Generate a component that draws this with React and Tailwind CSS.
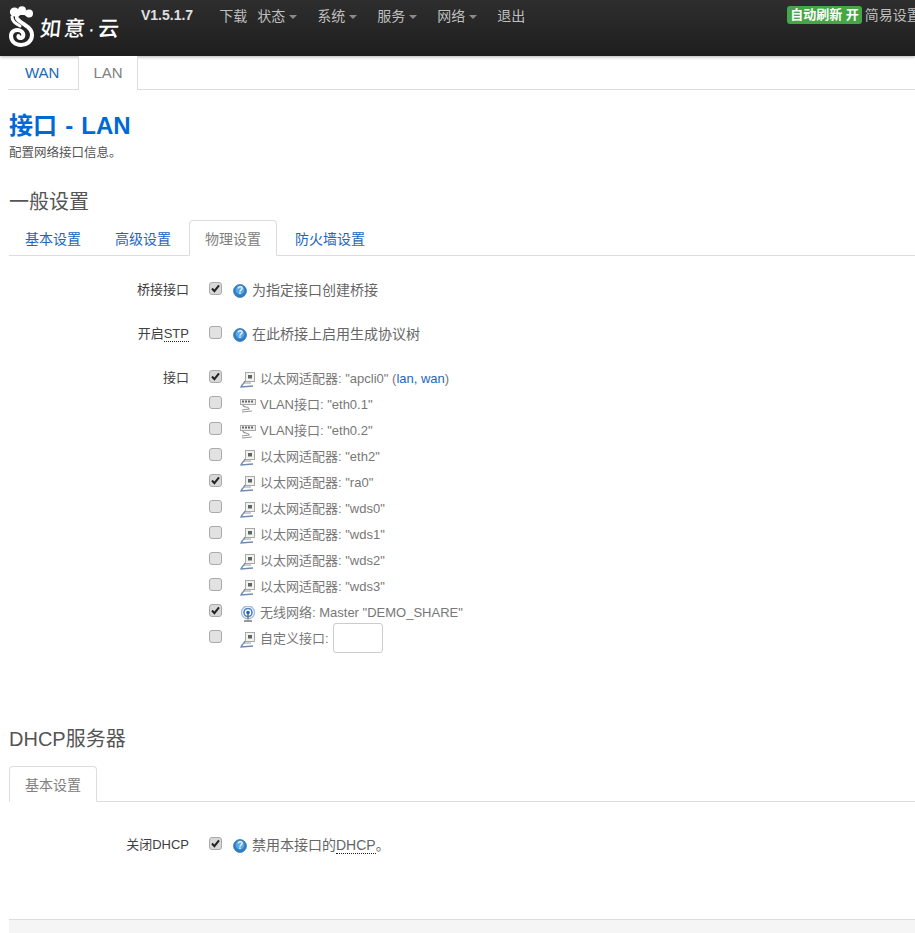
import React from 'react';

const FONT = '[font-family:"Liberation_Sans","Noto_Sans_CJK_SC",sans-serif]';
const LINK = 'text-[#1a66c0]';

// brand swirl next to the logo text
const LogoMark = () => (
    <svg width="25" height="41" viewBox="0 0 25 41" fill="none" className="shrink-0">
        <circle cx="5.5" cy="6" r="4.6" fill="white" />
        <circle cx="13" cy="4.2" r="4" fill="white" />
        <circle cx="20" cy="7.5" r="4" fill="white" />
        <path d="M18 8 C13 6 9 7 8 10 C7 14 12 16 16 19 C21 22 23 25 23 29 C23 36 17 39 12 39 C6 39 2 35 2 30 C2 25 7 23 11 24.5 C15 26 15.5 31 12 32 C10 32.5 9 31 9.5 30" stroke="white" strokeWidth="4" strokeLinecap="round" />
        <path d="M3 11 C3 15 7 18 11 20" stroke="white" strokeWidth="3" strokeLinecap="round" />
        <path d="M10 11 C12 9 15 9 17 11" stroke="#252525" strokeWidth="1.2" strokeLinecap="round" />
    </svg>
);

const Caret = () => (
    <span className="ml-[4px] inline-block h-0 w-0 border-x-4 border-t-4 border-x-transparent border-t-[#8a8a8a] align-middle" />
);

const HelpIcon = () => (
    <svg width="14" height="14" viewBox="0 0 14 14" className="shrink-0">
        <circle cx="7" cy="7" r="6.4" fill="#2f7fc8" stroke="#2a6aa8" strokeWidth="0.8" />
        <circle cx="7" cy="6" r="4.4" fill="#5aa5e4" />
        <text x="7" y="10.4" textAnchor="middle" fontSize="10" fontWeight="700" fill="#e8f3fc" fontFamily="Liberation Sans">?</text>
    </svg>
);

const Checkbox = ({ checked }) => (
    <span className={`flex h-[13px] w-[13px] shrink-0 items-center justify-center rounded-[3px] border border-[#aaa] ${checked ? 'bg-[#d8d8d8]' : 'bg-[#e2e2e2]'}`}>
        {checked && (
            <svg width="9" height="9" viewBox="0 0 9 9" fill="none">
                <path d="M1 4.5 L3.4 7.2 L8 1.4" stroke="#222" strokeWidth="2" />
            </svg>
        )}
    </span>
);

const EthIcon = () => (
    <svg width="16" height="16" viewBox="0 0 16 16" fill="none" className="shrink-0">
        <rect x="5.5" y="0.5" width="9" height="9" fill="#f2f2f2" stroke="#a8a8a8" />
        <rect x="8" y="3" width="4" height="3.5" fill="#5a6a5a" />
        <path d="M5 9 C4 12 2 12 1 15 L13 14" stroke="#6a8cb3" strokeWidth="1.3" />
        <path d="M3 11 L11 11" stroke="#9a9a9a" strokeWidth="1" />
    </svg>
);

const VlanIcon = () => (
    <svg width="16" height="16" viewBox="0 0 16 16" fill="none" className="shrink-0">
        <rect x="0.5" y="1.5" width="15" height="5" fill="#eeeeee" stroke="#a8a8a8" />
        <path d="M2 3.5h2M5 3.5h2M8 3.5h2M11 3.5h2" stroke="#666" strokeWidth="2" />
        <path d="M3 7 C3 10 9 8 9 11 L2 12 M2 14 L12 13" stroke="#9a9a9a" strokeWidth="1.2" />
    </svg>
);

const WifiIcon = () => (
    <svg width="16" height="16" viewBox="0 0 16 16" fill="none" className="shrink-0">
        <circle cx="8" cy="6.5" r="6.5" stroke="#9dbde2" strokeWidth="1.4" />
        <circle cx="8" cy="6.5" r="4" stroke="#4f81bd" strokeWidth="1.6" />
        <circle cx="8" cy="6.5" r="1.8" fill="#2c5f9e" />
        <path d="M8 8 L8 13 M4 15 L12 15" stroke="#777" strokeWidth="1.6" />
    </svg>
);

const Tab = ({ label, active, className = '' }) => (
    <div
        className={`flex h-[36px] shrink-0 items-center text-[14px] ${active
            ? '-mb-px -ml-px rounded-t-[4px] border border-b-white border-[#ddd] bg-white px-[15px] pt-[2px] text-[#808080]'
            : `mr-[4px] px-[15px] pt-[2px] ${LINK}`} ${className}`}
    >
        {label}
    </div>
);

const Row = ({ label, abbr, children, className = '' }) => (
    <div className={`flex ${className}`}>
        <div className="w-[180px] shrink-0 pt-[2px] text-right text-[13px] leading-[18px] text-[#404040]">
            {label}
            {abbr && <span className="border-b border-dotted border-[#222]">{abbr}</span>}
        </div>
        <div className="ml-[20px] min-w-0 flex-1">{children}</div>
    </div>
);

const Help = ({ checked, children }) => (
    <div className="flex items-start">
        <span className="mt-[3px]"><Checkbox checked={checked} /></span>
        <span className="ml-[11px] mt-[5px]"><HelpIcon /></span>
        <span className="ml-[5px] mt-[1px] text-[14px] leading-[20px] text-[#666]">{children}</span>
    </div>
);

const ifaces = [
    { icon: 'eth', text: '以太网适配器: "apcli0"', checked: true, zones: true },
    { icon: 'vlan', text: 'VLAN接口: "eth0.1"' },
    { icon: 'vlan', text: 'VLAN接口: "eth0.2"' },
    { icon: 'eth', text: '以太网适配器: "eth2"' },
    { icon: 'eth', text: '以太网适配器: "ra0"', checked: true },
    { icon: 'eth', text: '以太网适配器: "wds0"' },
    { icon: 'eth', text: '以太网适配器: "wds1"' },
    { icon: 'eth', text: '以太网适配器: "wds2"' },
    { icon: 'eth', text: '以太网适配器: "wds3"' },
    { icon: 'wifi', text: '无线网络: Master "DEMO_SHARE"', checked: true },
];

const IfaceIcon = ({ type }) => {
    if (type === 'vlan') return <VlanIcon />;
    if (type === 'wifi') return <WifiIcon />;
    return <EthIcon />;
};

const App = () => (
    <div className={`h-[933px] w-[915px] overflow-hidden bg-white ${FONT}`}>
        {/* Top bar */}
        <header className="flex h-[56px] w-[915px] items-start overflow-hidden bg-gradient-to-b from-[#2e2e2e] to-[#1e1e1e] shadow-[0_1px_3px_rgba(0,0,0,0.3)]">
            <div className="ml-[9px] mt-[6px] flex w-[124px] shrink-0 items-center">
                <LogoMark />
                <span className="ml-[6px] mt-[4px] -skew-x-6 whitespace-nowrap text-[21px] font-medium leading-none tracking-[3px] text-white">如意·云</span>
            </div>
            <span className="ml-[8px] mt-[6px] shrink-0 text-[14px] font-bold leading-[18px] text-[#e0e0e0]">V1.5.1.7</span>
            <nav className="ml-[26px] mt-[7px] flex shrink-0 text-[14px] leading-[18px] text-[#bfbfbf]">
                <span className="w-[38px]">下载</span>
                <span className="w-[60px]">状态<Caret /></span>
                <span className="w-[60px]">系统<Caret /></span>
                <span className="w-[60px]">服务<Caret /></span>
                <span className="w-[60px]">网络<Caret /></span>
                <span>退出</span>
            </nav>
            <div className="ml-[262px] mt-[6px] flex shrink-0 items-center">
                <span className="rounded-[3px] bg-[#46a546] px-[3px] text-[13px] font-bold leading-[18px] text-white">自动刷新 开</span>
                <span className="ml-[3px] whitespace-nowrap text-[14px] leading-[18px] text-[#bfbfbf]">简易设置</span>
            </div>
        </header>

        {/* Interface tabs */}
        <div className="ml-[8px] flex h-[34px] border-b border-[#ddd]">
            <div className={`flex items-center pl-[17px] pr-[19px] pt-[1px] text-[15px] ${LINK}`}>WAN</div>
            <div className="-mb-px flex items-center border-x border-[#ddd] bg-white px-[14px] pt-[1px] text-[15px] text-[#808080]">LAN</div>
        </div>

        <main className="pl-[9px]">
            <h1 className="mt-[20px] text-[24px] font-bold leading-[32px] text-[#0069d6] [word-spacing:1.5px]">接口 - LAN</h1>
            <p className="mt-[2px] text-[12.5px] leading-[18px] text-[#555]">配置网络接口信息。</p>

            <h2 className="mt-[29px] text-[20px] leading-[22px] text-[#555]">一般设置</h2>
            <div className="mt-[7px] flex h-[36px] border-b border-[#ddd] pl-px">
                <Tab label="基本设置" />
                <Tab label="高级设置" />
                <Tab label="物理设置" active className="mr-[3px]" />
                <Tab label="防火墙设置" />
            </div>

            <div className="mt-[23px]">
                <Row label="桥接接口" className="h-[44px]">
                    <Help checked>为指定接口创建桥接</Help>
                </Row>
                <Row label="开启" abbr="STP" className="h-[44px]">
                    <Help>在此桥接上启用生成协议树</Help>
                </Row>
                <Row label="接口">
                    {ifaces.map((item) => (
                        <div key={item.text} className="flex h-[26px] items-start">
                            <span className="mt-[3px]"><Checkbox checked={item.checked} /></span>
                            <span className="ml-[18px] mt-[5px]"><IfaceIcon type={item.icon} /></span>
                            <span className="ml-[4px] mt-[3px] whitespace-nowrap text-[13px] leading-[18px] text-[#777]">
                                {item.text}
                                {item.zones && <> (<span className={LINK}>lan, wan</span>)</>}
                            </span>
                        </div>
                    ))}
                    <div className="flex items-start">
                        <span className="mt-[3px]"><Checkbox /></span>
                        <span className="ml-[18px] mt-[5px]"><EthIcon /></span>
                        <span className="ml-[4px] mt-[3px] text-[13px] leading-[18px] text-[#777]">自定义接口:</span>
                        <span className="-mt-[4px] ml-[4px] h-[30px] w-[50px] rounded-[3px] border border-[#ccc] bg-white" />
                    </div>
                </Row>
            </div>

            <h2 className="mt-[75px] text-[20px] leading-[22px] text-[#555]">DHCP服务器</h2>
            <div className="mt-[16px] flex h-[36px] border-b border-[#ddd] pl-px">
                <Tab label="基本设置" active />
            </div>

            <div className="mt-[32px]">
                <Row label="关闭DHCP" className="h-[85px]">
                    <Help checked>
                        禁用本接口的<span className="border-b border-dotted border-[#222]">DHCP</span>。
                    </Help>
                </Row>
            </div>

            <div className="h-[20px] border-t border-[#ddd] bg-[#f5f5f5]" />
        </main>
    </div>
);

export default App;
